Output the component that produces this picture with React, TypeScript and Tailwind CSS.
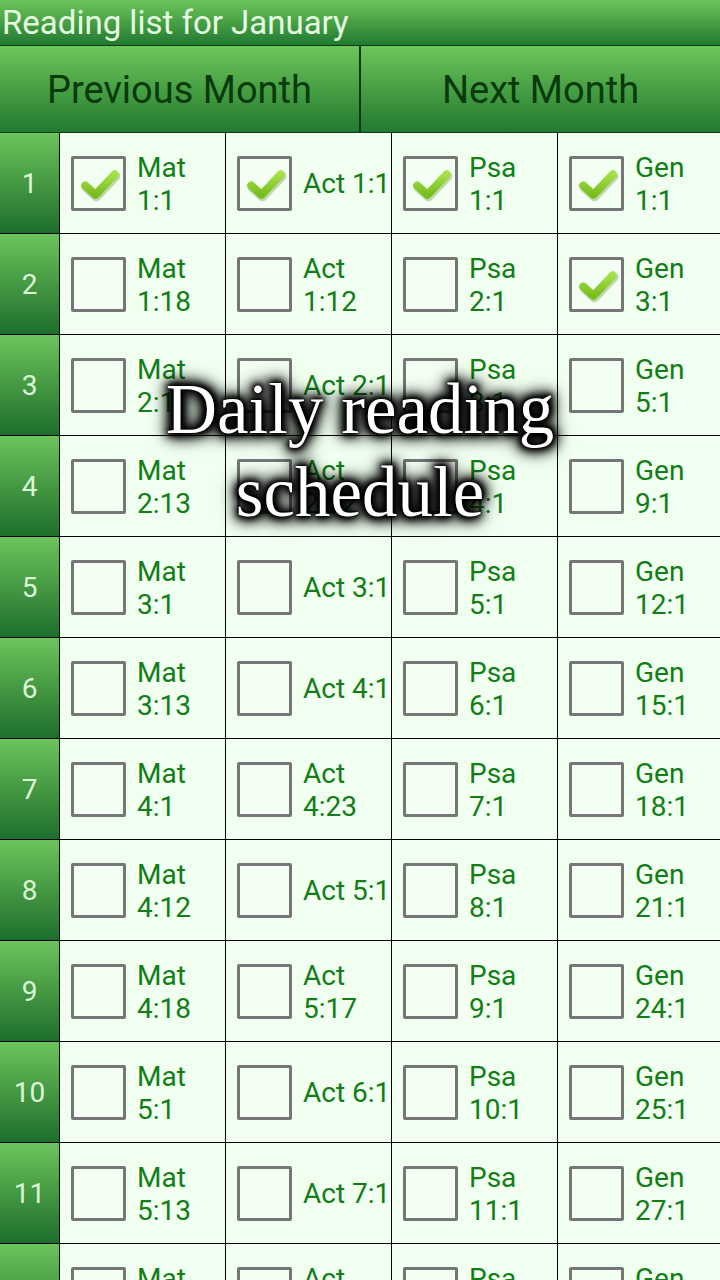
import React from 'react'

type Entry = { lines: string[]; checked: boolean }

// Reading plan rows: Mat / Act / Psa / Gen
const ROWS: Entry[][] = [
  [
    { lines: ['Mat', '1:1'], checked: true },
    { lines: ['Act 1:1'], checked: true },
    { lines: ['Psa', '1:1'], checked: true },
    { lines: ['Gen', '1:1'], checked: true },
  ],
  [
    { lines: ['Mat', '1:18'], checked: false },
    { lines: ['Act', '1:12'], checked: false },
    { lines: ['Psa', '2:1'], checked: false },
    { lines: ['Gen', '3:1'], checked: true },
  ],
  [
    { lines: ['Mat', '2:1'], checked: false },
    { lines: ['Act 2:1'], checked: false },
    { lines: ['Psa', '3:1'], checked: false },
    { lines: ['Gen', '5:1'], checked: false },
  ],
  [
    { lines: ['Mat', '2:13'], checked: false },
    { lines: ['Act', '2:22'], checked: false },
    { lines: ['Psa', '4:1'], checked: false },
    { lines: ['Gen', '9:1'], checked: false },
  ],
  [
    { lines: ['Mat', '3:1'], checked: false },
    { lines: ['Act 3:1'], checked: false },
    { lines: ['Psa', '5:1'], checked: false },
    { lines: ['Gen', '12:1'], checked: false },
  ],
  [
    { lines: ['Mat', '3:13'], checked: false },
    { lines: ['Act 4:1'], checked: false },
    { lines: ['Psa', '6:1'], checked: false },
    { lines: ['Gen', '15:1'], checked: false },
  ],
  [
    { lines: ['Mat', '4:1'], checked: false },
    { lines: ['Act', '4:23'], checked: false },
    { lines: ['Psa', '7:1'], checked: false },
    { lines: ['Gen', '18:1'], checked: false },
  ],
  [
    { lines: ['Mat', '4:12'], checked: false },
    { lines: ['Act 5:1'], checked: false },
    { lines: ['Psa', '8:1'], checked: false },
    { lines: ['Gen', '21:1'], checked: false },
  ],
  [
    { lines: ['Mat', '4:18'], checked: false },
    { lines: ['Act', '5:17'], checked: false },
    { lines: ['Psa', '9:1'], checked: false },
    { lines: ['Gen', '24:1'], checked: false },
  ],
  [
    { lines: ['Mat', '5:1'], checked: false },
    { lines: ['Act 6:1'], checked: false },
    { lines: ['Psa', '10:1'], checked: false },
    { lines: ['Gen', '25:1'], checked: false },
  ],
  [
    { lines: ['Mat', '5:13'], checked: false },
    { lines: ['Act 7:1'], checked: false },
    { lines: ['Psa', '11:1'], checked: false },
    { lines: ['Gen', '27:1'], checked: false },
  ],
  [
    { lines: ['Mat', '5:21'], checked: false },
    { lines: ['Act', '7:30'], checked: false },
    { lines: ['Psa', '12:1'], checked: false },
    { lines: ['Gen', '29:1'], checked: false },
  ],
]

function CheckBox({ checked }: { checked: boolean }) {
  return (
    <div className="relative w-[55px] h-[55px] shrink-0 rounded-[2px] border-[3px] border-[#767676] bg-[#f4fff4]">
      {checked && (
        <svg viewBox="0 0 54 54" className="absolute left-[-3px] top-[-3px] w-[55px] h-[55px]">
          <defs>
            <linearGradient id="chk" x1="0" y1="0" x2="0" y2="1">
              <stop offset="0" stopColor="#a6e04a" />
              <stop offset="1" stopColor="#78bd1e" />
            </linearGradient>
          </defs>
          <path d="M14 29 L24 38 L43 18" fill="none" stroke="#5f8f2a" strokeOpacity="0.35" strokeWidth="9" strokeLinecap="round" strokeLinejoin="round" transform="translate(1 2)" />
          <path d="M14 29 L24 38 L43 18" fill="none" stroke="url(#chk)" strokeWidth="8" strokeLinecap="round" strokeLinejoin="round" />
        </svg>
      )}
    </div>
  )
}

function Cell({ entry, last }: { entry: Entry; last?: boolean }) {
  return (
    <div className={`flex items-center h-full pl-[11px] gap-[11px] overflow-hidden ${last ? '' : 'border-r border-black'}`}>
      <CheckBox checked={entry.checked} />
      <div className="pt-[1px] text-[28px] leading-[33px] text-[#137d17] whitespace-nowrap">
        {entry.lines.map((l) => (
          <div key={l}>{l}</div>
        ))}
      </div>
    </div>
  )
}

export default function App() {
  return (
    <div className="relative w-[720px] h-[1280px] overflow-hidden bg-[#f0fff0] font-['Roboto','Liberation_Sans',sans-serif]">
      {/* title bar */}
      <div className="h-[45px] flex items-center pl-[2px] bg-gradient-to-b from-[#6cc65a] to-[#1f7a31]">
        <span className="text-[33px] leading-none text-[#e4fbe0]">Reading list for January</span>
      </div>

      {/* month buttons */}
      <div className="flex h-[88px] border-y border-[#0d3a12]">
        <button className="flex-1 pt-[2px] border-r-2 border-[#0d3a12] bg-gradient-to-b from-[#6cc65a] to-[#207a30] text-[38px] text-[#083a0b]">
          Previous Month
        </button>
        <button className="flex-1 pt-[2px] bg-gradient-to-b from-[#6cc65a] to-[#207a30] text-[38px] text-[#083a0b]">
          Next Month
        </button>
      </div>

      {/* schedule grid */}
      <div>
        {ROWS.map((row, i) => (
          <div key={i} className="grid grid-cols-[60px_166px_166px_166px_162px] h-[101px] border-b border-black">
            <div className="flex items-center justify-center pt-[1px] border-r border-black bg-gradient-to-b from-[#6bc55b] to-[#1c6f2c] text-[28px] text-[#dcf7d6]">
              {i + 1}
            </div>
            {row.map((e, j) => (
              <Cell key={j} entry={e} last={j === 3} />
            ))}
          </div>
        ))}
      </div>

      {/* caption overlay */}
      <div className="absolute left-0 right-0 top-[368px] flex flex-col items-center font-['Liberation_Serif','Times_New_Roman',serif] text-[71px] leading-[83px] text-white [text-shadow:0_0_2px_#000,0_0_4px_#000,0_0_6px_#000,0_0_8px_#000,0_0_10px_#000,0_0_12px_#000,0_0_14px_#000,0_0_16px_#000,0_0_18px_#000,0_0_22px_#000]">
        <div>Daily reading</div>
        <div>schedule</div>
      </div>
    </div>
  )
}
